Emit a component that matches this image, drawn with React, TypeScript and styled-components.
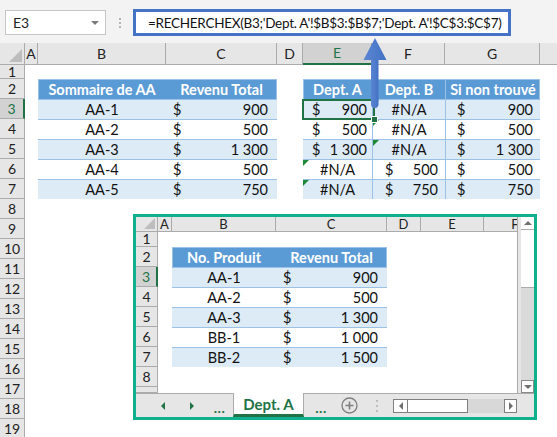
import React from 'react';
import styled, { createGlobalStyle, css } from 'styled-components';

const GlobalStyle = createGlobalStyle`
  html, body { margin: 0; padding: 0; background: #fff; }
  body { font-family: Lato, "Open Sans", sans-serif; color: #000; overflow: hidden; }
  * { box-sizing: border-box; }
`;

const GREEN = '#217346';
const HDR = '#E6E6E6';
const HDR_LINE = '#ABABAB';
const BLUE_LINE = '#9BC2E6';

const Page = styled.div`
  position: relative;
  width: 557px;
  height: 437px;
  overflow: hidden;
  background: #fff;
`;

const TopBar = styled.div`
  height: 43px;
  background: #F3F3F3;
  display: flex;
  align-items: flex-start;
  padding: 9px 0 0 5px;
`;

const NameBox = styled.div`
  margin-top: 1px;
  width: 101px;
  height: 25px;
  background: #fff;
  border: 1px solid #C6C6C6;
  display: flex;
  align-items: center;
  justify-content: space-between;
  padding: 0 6px 0 7px;
  font-size: 14px;
  color: #222;
`;

const DropTri = styled.span`
  width: 0;
  height: 0;
  border-left: 4px solid transparent;
  border-right: 4px solid transparent;
  border-top: 4px solid #7A7A7A;
`;

const Dots = styled.div<{ $gap: number; $color: string }>`
  display: flex;
  flex-direction: column;
  align-items: center;
  justify-content: center;
  gap: ${p => p.$gap}px;
  align-self: stretch;
  & > i {
    display: block;
    width: 2px;
    height: 2px;
    background: ${p => p.$color};
  }
`;

const DotsTop = styled(Dots)`
  width: 27px;
  height: 27px;
  align-self: auto;
`;

const FormulaBox = styled.div`
  width: 378px;
  height: 27px;
  background: #fff;
  border: 3px solid #4472C4;
  display: flex;
  align-items: center;
  padding-left: 12px;
  font-size: 13.5px;
  letter-spacing: -0.28px;
  color: #111;
  white-space: nowrap;
  overflow: hidden;
`;

const Sheet = styled.div`
  display: grid;
  grid-template-columns: 25px 13px 128px 111px 26px 69px 73px 95px 80px;
  grid-template-rows: 22px 14px repeat(18, 20px);
  height: 394px;
  overflow: hidden;
`;

const Corner = styled.div<{ $size: number }>`
  position: relative;
  background: ${HDR};
  border-right: 1px solid ${HDR_LINE};
  border-bottom: 1px solid ${HDR_LINE};
  &::after {
    content: '';
    position: absolute;
    right: 2px;
    bottom: 2px;
    width: 0;
    height: 0;
    border-left: ${p => p.$size}px solid transparent;
    border-bottom: ${p => p.$size}px solid #BDBDBD;
  }
`;

const ColHead = styled.div<{ $sel?: boolean; $fs: number }>`
  background: ${p => (p.$sel ? '#D2D2D2' : HDR)};
  border-right: 1px solid ${HDR_LINE};
  border-bottom: ${p => (p.$sel ? `2px solid ${GREEN}` : `1px solid ${HDR_LINE}`)};
  color: ${p => (p.$sel ? GREEN : '#222')};
  font-size: ${p => p.$fs}px;
  line-height: 1;
  display: flex;
  align-items: center;
  justify-content: center;
  white-space: nowrap;
`;

const RowHead = styled.div<{ $sel?: boolean }>`
  background: ${p => (p.$sel ? '#D2D2D2' : HDR)};
  border-right: ${p => (p.$sel ? `2px solid ${GREEN}` : `1px solid ${HDR_LINE}`)};
  border-bottom: 1px solid ${HDR_LINE};
  color: ${p => (p.$sel ? GREEN : '#222')};
  font-size: 14px;
  line-height: 1;
  display: flex;
  align-items: center;
  justify-content: center;
`;

const Table = styled.div<{ $cols: string; $gc: string; $gr: string }>`
  grid-column: ${p => p.$gc};
  grid-row: ${p => p.$gr};
  display: grid;
  grid-template-columns: ${p => p.$cols};
  grid-auto-rows: 20px;
  outline: 1px solid ${BLUE_LINE};
  outline-offset: -1px;
  position: relative;
  font-size: 14.5px;
`;

const THead = styled.div<{ $sep?: boolean }>`
  background: #5B9BD5;
  color: #fff;
  font-weight: 700;
  display: flex;
  align-items: center;
  justify-content: center;
  white-space: nowrap;
  border-left: ${p => (p.$sep ? `1px solid ${BLUE_LINE}` : 'none')};
`;

const TCell = styled.div<{
  $alt: boolean;
  $sep?: boolean;
  $money?: boolean;
  $pl?: number;
  $pr?: number;
  $flag?: boolean;
  $selected?: boolean;
}>`
  position: relative;
  background: ${p => (p.$alt ? '#DDEBF7' : '#fff')};
  border-top: 1px solid ${BLUE_LINE};
  border-left: ${p => (p.$sep ? `1px solid ${BLUE_LINE}` : 'none')};
  display: flex;
  align-items: center;
  justify-content: ${p => (p.$money ? 'space-between' : 'center')};
  padding: 0 ${p => p.$pr ?? 0}px 0 ${p => p.$pl ?? 0}px;
  white-space: nowrap;
  color: #111;
  ${p =>
    p.$flag &&
    css`
      &::before {
        content: '';
        position: absolute;
        left: 0;
        top: 0;
        width: 0;
        height: 0;
        border-top: 6px solid #1F8A35;
        border-right: 6px solid transparent;
      }
    `}
  ${p =>
    p.$selected &&
    css`
      z-index: 2;
      &::after {
        content: '';
        position: absolute;
        left: -1px;
        top: -1px;
        right: -3px;
        bottom: -1px;
        border: 2px solid ${GREEN};
        pointer-events: none;
      }
    `}
`;

const FillHandle = styled.span`
  position: absolute;
  right: -6px;
  bottom: -4px;
  width: 7px;
  height: 7px;
  background: ${GREEN};
  border: 1px solid #fff;
  z-index: 3;
`;

const ArrowSvg = styled.svg`
  position: absolute;
  left: 362px;
  top: 37px;
  z-index: 5;
`;

/* ---------- second window ---------- */

const Window = styled.div`
  position: absolute;
  left: 133px;
  top: 214px;
  width: 404px;
  height: 206px;
  border: 3px solid #0FB08E;
  background: #fff;
  display: flex;
  flex-direction: column;
  z-index: 4;
`;

const WinBody = styled.div`
  display: flex;
  height: 176px;
`;

const WinGrid = styled.div`
  width: 381px;
  display: grid;
  grid-template-columns: 22px 14px 104px 111px 34px 63px 63px;
  grid-template-rows: 15px 15px repeat(7, 20px) 1fr;
  overflow: hidden;
`;

const VScrollCol = styled.div`
  width: 17px;
  background: ${HDR};
  border-left: 1px solid ${HDR_LINE};
  padding-left: 3px;
  display: flex;
  flex-direction: column;
`;

const ScrollBtn = styled.div<{ $boxed?: boolean }>`
  height: 13px;
  background: #fff;
  display: flex;
  align-items: center;
  justify-content: center;
  border: ${p => (p.$boxed ? '1px solid #8A8A8A' : 'none')};
  border-bottom: 1px solid ${p => (p.$boxed ? '#8A8A8A' : HDR_LINE)};
`;

const Tri = styled.span<{ $dir: 'up' | 'down' | 'left' | 'right'; $size: number; $color: string }>`
  width: 0;
  height: 0;
  ${p => {
    const s = p.$size;
    switch (p.$dir) {
      case 'up':
        return css`border-left: ${s}px solid transparent; border-right: ${s}px solid transparent; border-bottom: ${s}px solid ${p.$color};`;
      case 'down':
        return css`border-left: ${s}px solid transparent; border-right: ${s}px solid transparent; border-top: ${s}px solid ${p.$color};`;
      case 'left':
        return css`border-top: ${s}px solid transparent; border-bottom: ${s}px solid transparent; border-right: ${s}px solid ${p.$color};`;
      default:
        return css`border-top: ${s}px solid transparent; border-bottom: ${s}px solid transparent; border-left: ${s}px solid ${p.$color};`;
    }
  }}
`;

const VThumb = styled.div`
  height: 58px;
  background: #fff;
  border-bottom: 1px solid ${HDR_LINE};
`;

const VTrack = styled.div`
  flex: 1;
  background: #DADADA;
`;

const TabBar = styled.div`
  flex: 1;
  background: ${HDR};
  border-top: 1px solid ${HDR_LINE};
  display: flex;
  align-items: stretch;
  padding-left: 12px;
`;

const NavBtn = styled.div<{ $w: number }>`
  width: ${p => p.$w}px;
  display: flex;
  align-items: center;
  justify-content: center;
  color: ${GREEN};
  font-weight: 700;
  font-size: 14px;
`;

const Ellipsis = styled.span`
  letter-spacing: 0.5px;
  margin-top: 4px;
`;

const SheetTab = styled.div`
  width: 71px;
  margin-top: -1px;
  background: #fff;
  border-left: 1px solid ${HDR_LINE};
  border-right: 1px solid ${HDR_LINE};
  border-bottom: 3px solid ${GREEN};
  display: flex;
  align-items: center;
  justify-content: center;
  color: ${GREEN};
  font-weight: 700;
  font-size: 15px;
  white-space: nowrap;
`;

const HScroll = styled.div`
  width: 124px;
  height: 14px;
  align-self: center;
  display: flex;
`;

const HBtn = styled.div<{ $w: number }>`
  width: ${p => p.$w}px;
  background: #fff;
  border: 1px solid #7F7F7F;
  display: flex;
  align-items: center;
  justify-content: center;
`;

const HThumb = styled.div`
  width: 60px;
  background: #fff;
  border: 1px solid #7F7F7F;
  border-left: none;
`;

const HTrack = styled.div`
  flex: 1;
  background: #D8D8D8;
`;

const place = (gc: number | string, gr: number | string) => ({ gridColumn: gc, gridRow: gr });

// the H column header lies past the window's right edge, so its label is not shown
const mainCols = ['A', 'B', 'C', 'D', 'E', 'F', 'G', ''];
const t1 = [
  ['AA-1', '900'],
  ['AA-2', '500'],
  ['AA-3', '1\u00A0300'],
  ['AA-4', '500'],
  ['AA-5', '750'],
];
type C2 = { m?: string; na?: boolean };
const t2: { e: C2; f: C2; g: string }[] = [
  { e: { m: '900' }, f: { na: true }, g: '900' },
  { e: { m: '500' }, f: { na: true }, g: '500' },
  { e: { m: '1\u00A0300' }, f: { na: true }, g: '1\u00A0300' },
  { e: { na: true }, f: { m: '500' }, g: '500' },
  { e: { na: true }, f: { m: '750' }, g: '750' },
];
const t3 = [
  ['AA-1', '900'],
  ['AA-2', '500'],
  ['AA-3', '1\u00A0300'],
  ['BB-1', '1\u00A0000'],
  ['BB-2', '1\u00A0500'],
];

export default function App() {
  return (
    <Page>
      <GlobalStyle />
      <TopBar>
        <NameBox>
          <span>E3</span>
          <DropTri />
        </NameBox>
        <DotsTop $gap={2} $color="#B4B4B4">
          <i />
          <i />
          <i />
        </DotsTop>
        <FormulaBox>=RECHERCHEX(B3;'Dept. A'!$B$3:$B$7;'Dept. A'!$C$3:$C$7)</FormulaBox>
      </TopBar>

      <Sheet>
        <Corner $size={13} style={place(1, 1)} />
        {mainCols.map((c, i) => (
          <ColHead key={i} $fs={14} $sel={c === 'E'} style={place(i + 2, 1)}>
            {c}
          </ColHead>
        ))}
        {Array.from({ length: 19 }, (_, i) => (
          <RowHead key={i} $sel={i + 1 === 3} style={place(1, i + 2)}>
            {i + 1}
          </RowHead>
        ))}

        <Table $cols="128px 111px" $gc="3 / 5" $gr="3 / 9">
          <THead>Sommaire de AA</THead>
          <THead>Revenu Total</THead>
          {t1.map((r, i) => (
            <React.Fragment key={i}>
              <TCell $alt={i % 2 === 0}>{r[0]}</TCell>
              <TCell $alt={i % 2 === 0} $money $pl={7} $pr={9}>
                <span>$</span>
                <span>{r[1]}</span>
              </TCell>
            </React.Fragment>
          ))}
        </Table>

        <Table $cols="69px 73px 95px" $gc="6 / 9" $gr="3 / 9">
          <THead>Dept. A</THead>
          <THead $sep>Dept. B</THead>
          <THead $sep>Si non trouvé</THead>
          {t2.map((r, i) => {
            const alt = i % 2 === 0;
            return (
              <React.Fragment key={i}>
                {r.e.m ? (
                  <TCell $alt={alt} $money $pl={9} $pr={5} $selected={i === 0}>
                    <span>$</span>
                    <span>{r.e.m}</span>
                    {i === 0 && <FillHandle />}
                  </TCell>
                ) : (
                  <TCell $alt={alt} $flag>
                    #N/A
                  </TCell>
                )}
                {r.f.m ? (
                  <TCell $alt={alt} $sep $money $pl={12} $pr={7}>
                    <span>$</span>
                    <span>{r.f.m}</span>
                  </TCell>
                ) : (
                  <TCell $alt={alt} $sep $flag>
                    #N/A
                  </TCell>
                )}
                <TCell $alt={alt} $sep $money $pl={11} $pr={7}>
                  <span>$</span>
                  <span>{r.g}</span>
                </TCell>
              </React.Fragment>
            );
          })}
        </Table>
      </Sheet>

      <ArrowSvg width="26" height="74" viewBox="0 0 26 74">
        <defs>
          <linearGradient id="ag" x1="0" x2="1" y1="0" y2="0">
            <stop offset="0" stopColor="#5A86D3" />
            <stop offset="1" stopColor="#4472C4" />
          </linearGradient>
        </defs>
        <rect x="9" y="20" width="7.5" height="51" rx="3.7" fill="url(#ag)" />
        <path d="M13 1 L24.5 23 L1.5 23 Z" fill="url(#ag)" />
      </ArrowSvg>

      <Window>
        <WinBody>
          <WinGrid>
            <Corner $size={11} style={place(1, 1)} />
            {['A', 'B', 'C', 'D', 'E', 'F'].map((c, i) => (
              <ColHead key={c} $fs={13} style={place(i + 2, 1)}>
                {c}
              </ColHead>
            ))}
            {Array.from({ length: 9 }, (_, i) => (
              <RowHead key={i} $sel={i + 1 === 3} style={place(1, i + 2)}>
                {i < 8 ? i + 1 : ''}
              </RowHead>
            ))}
            <Table $cols="104px 111px" $gc="3 / 5" $gr="3 / 9">
              <THead>No. Produit</THead>
              <THead>Revenu Total</THead>
              {t3.map((r, i) => (
                <React.Fragment key={i}>
                  <TCell $alt={i % 2 === 0}>{r[0]}</TCell>
                  <TCell $alt={i % 2 === 0} $money $pl={7} $pr={9}>
                    <span>$</span>
                    <span>{r[1]}</span>
                  </TCell>
                </React.Fragment>
              ))}
            </Table>
          </WinGrid>
          <VScrollCol>
            <ScrollBtn>
              <Tri $dir="up" $size={4} $color="#6F6F6F" />
            </ScrollBtn>
            <VThumb />
            <VTrack />
            <ScrollBtn $boxed>
              <Tri $dir="down" $size={4} $color="#6F6F6F" />
            </ScrollBtn>
          </VScrollCol>
        </WinBody>
        <TabBar>
          <NavBtn $w={29}>
            <Tri $dir="left" $size={4} $color={GREEN} />
          </NavBtn>
          <NavBtn $w={29}>
            <Tri $dir="right" $size={4} $color={GREEN} />
          </NavBtn>
          <NavBtn $w={27}>
            <Ellipsis>...</Ellipsis>
          </NavBtn>
          <SheetTab>Dept. A</SheetTab>
          <NavBtn $w={34}>
            <Ellipsis>...</Ellipsis>
          </NavBtn>
          <NavBtn $w={22}>
            <svg width="17" height="17" viewBox="0 0 17 17">
              <circle cx="8.5" cy="8.5" r="7.5" fill="none" stroke="#7F7F7F" strokeWidth="1.3" />
              <path d="M8.5 4.5 V12.5 M4.5 8.5 H12.5" stroke="#7F7F7F" strokeWidth="1.6" />
            </svg>
          </NavBtn>
          <NavBtn $w={33}>
            <Dots $gap={3} $color="#BDBDBD">
              <i />
              <i />
              <i />
            </Dots>
          </NavBtn>
          <HScroll>
            <HBtn $w={15}>
              <Tri $dir="left" $size={4} $color="#6F6F6F" />
            </HBtn>
            <HThumb />
            <HTrack />
            <HBtn $w={13}>
              <Tri $dir="right" $size={4} $color="#6F6F6F" />
            </HBtn>
          </HScroll>
        </TabBar>
      </Window>
    </Page>
  );
}
